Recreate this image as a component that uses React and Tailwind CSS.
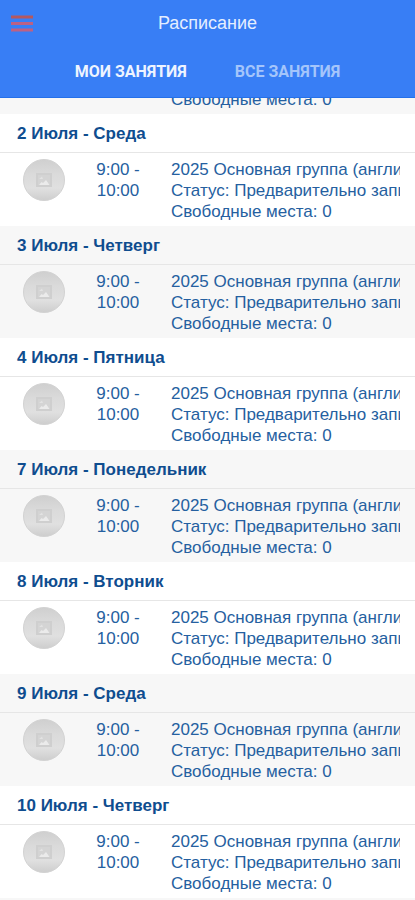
import clsx from 'clsx';

const days = [
  '2 Июля - Среда',
  '3 Июля - Четверг',
  '4 Июля - Пятница',
  '7 Июля - Понедельник',
  '8 Июля - Вторник',
  '9 Июля - Среда',
  '10 Июля - Четверг',
];

const AvatarPlaceholder = () => (
  <svg viewBox="0 0 42 42" className="h-[42px] w-[42px]" aria-hidden="true">
    <defs>
      <linearGradient id="avatar" x1="0" y1="0" x2="0" y2="1">
        <stop offset="0" stopColor="#cfcfcf" />
        <stop offset="0.35" stopColor="#dadada" />
        <stop offset="0.7" stopColor="#e0e0e0" />
        <stop offset="1" stopColor="#cdcdcd" />
      </linearGradient>
    </defs>
    <circle cx="21" cy="21" r="20.5" fill="url(#avatar)" stroke="#d2d2d2" />
    <rect x="13" y="14" width="16" height="14" fill="#cfcfcf" />
    <rect x="15" y="16" width="12" height="10" fill="#d4d4d4" />
    <path d="M16 26 L18.5 23 L20 24 L23 21 L26.5 26 Z" fill="#ebebeb" />
    <path d="M16 20 L19 17.5 L20 20 Z" fill="#e2e2e2" />
  </svg>
);

const Lesson = () => (
  <div className="flex px-[15px] pb-1 pt-[6px]">
    <div className="w-14 shrink-0 pl-2">
      <AvatarPlaceholder />
    </div>
    <div className="ml-[10px] w-[74px] shrink-0 text-center">
      9:00 -<br />
      10:00
    </div>
    <div className="ml-4 min-w-0 flex-1 overflow-hidden whitespace-nowrap">
      <p>2025 Основная группа (английский)</p>
      <p>Статус: Предварительно записан</p>
      <p>Свободные места: 0</p>
    </div>
  </div>
);

const App = () => {
  return (
    <div className="flex h-screen flex-col overflow-hidden bg-[#f7f7f7] font-['Liberation_Sans',Arial,sans-serif] text-[17px] leading-[21px] text-[#2560a0]">
      <header className="shrink-0 border-b border-[#2470ea] bg-[#387ef5] text-white">
        <div className="grid h-[46px] grid-cols-[1fr_auto_1fr] items-center px-[11px]">
          <button type="button" aria-label="Меню" className="w-[22px]">
            <svg viewBox="0 0 22 18" className="h-[18px] w-[22px]">
              <path d="M0 3 H22" stroke="#b4585f" strokeWidth="3" />
              <path d="M0 9.5 H22 M0 16 H22" stroke="#bd6184" strokeWidth="3" />
            </svg>
          </button>
          <h1 className="text-[18px] text-[#e4eeff]">Расписание</h1>
        </div>
        <nav className="flex h-[51px] items-center justify-center gap-12 font-['Roboto',sans-serif] text-[16px] font-bold">
          <button type="button" className="text-[#eef4ff]">МОИ ЗАНЯТИЯ</button>
          <button type="button" className="text-[#a4c5fb]">ВСЕ ЗАНЯТИЯ</button>
        </nav>
      </header>

      <main className="flex-1 overflow-hidden">
        {/* tail of the previous day, scrolled under the header */}
        <div className="flex h-4 flex-col justify-end overflow-hidden bg-[#f7f7f7] pb-1 pl-[171px]">
          <p className="shrink-0">Свободные места: 0</p>
        </div>
        {days.map((day, i) => (
          <section key={day} className={clsx(i % 2 === 0 ? 'bg-white' : 'bg-[#f7f7f7]')}>
            <h2 className="flex h-[39px] items-center border-b border-[#e6e6e6] px-[17px] font-bold text-[#0f4d8f]">
              {day}
            </h2>
            <Lesson />
          </section>
        ))}
      </main>
    </div>
  );
};

export default App;
